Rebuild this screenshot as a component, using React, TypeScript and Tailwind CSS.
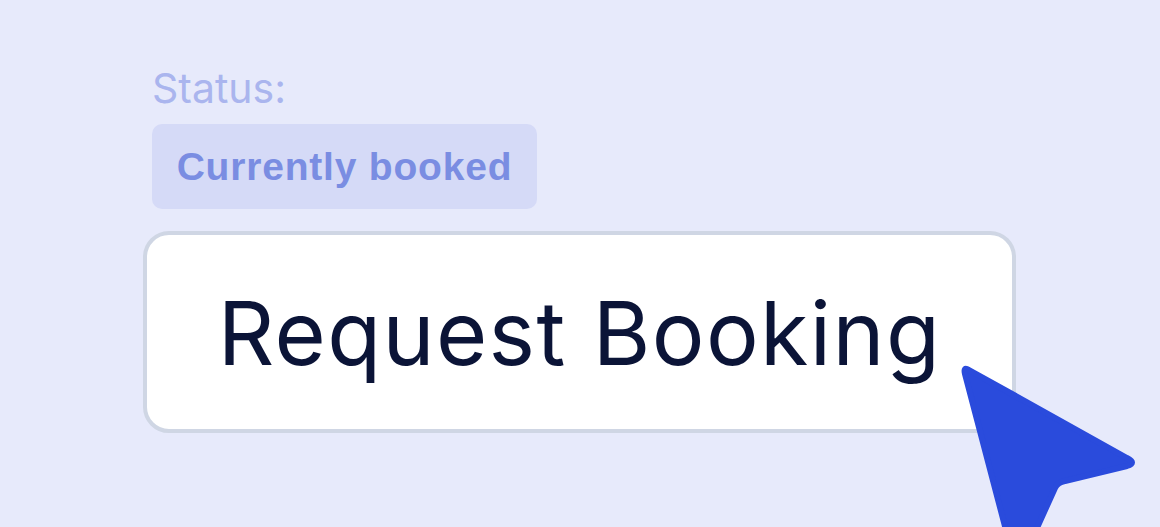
export default function App() {
  return (
    <div className="relative h-[527px] w-[1160px] overflow-hidden bg-[#e7eafb] font-['Inter','Liberation_Sans',sans-serif]">
      <div className="flex flex-col items-start pl-[143px] pt-[64px]">
        <div className="pl-[9px] text-[41px] leading-[48px] text-[#aab5ee]">Status:</div>
        <div className="ml-[9px] mt-[12px] flex h-[85px] w-[385px] items-center justify-center rounded-[10px] bg-[#d5daf7] pt-[2px] font-['Liberation_Sans',sans-serif] text-[39px] font-bold tracking-[0.8px] text-[#7a8de2]">
          Currently booked
        </div>
        <div className="mt-[22px] flex h-[202px] w-[873px] items-center justify-center rounded-[26px] border-[4px] border-[#cfd6e4] bg-white pt-[1px]">
          <span className="text-[88px] leading-none tracking-[1.4px] text-[#0b1437]">Request Booking</span>
        </div>
      </div>
      <svg className="absolute left-[955px] top-[360px]" width="200" height="220" viewBox="0 0 200 220">
        <path
          d="M14 10 Q8 6 10 14 L62 212 L100 128 Q103 122 110 121 L172 106 Q182 103 172 98 Z"
          fill="#2a4bdc"
          stroke="#2a4bdc"
          strokeWidth="6"
          strokeLinejoin="round"
        />
      </svg>
    </div>
  );
}
